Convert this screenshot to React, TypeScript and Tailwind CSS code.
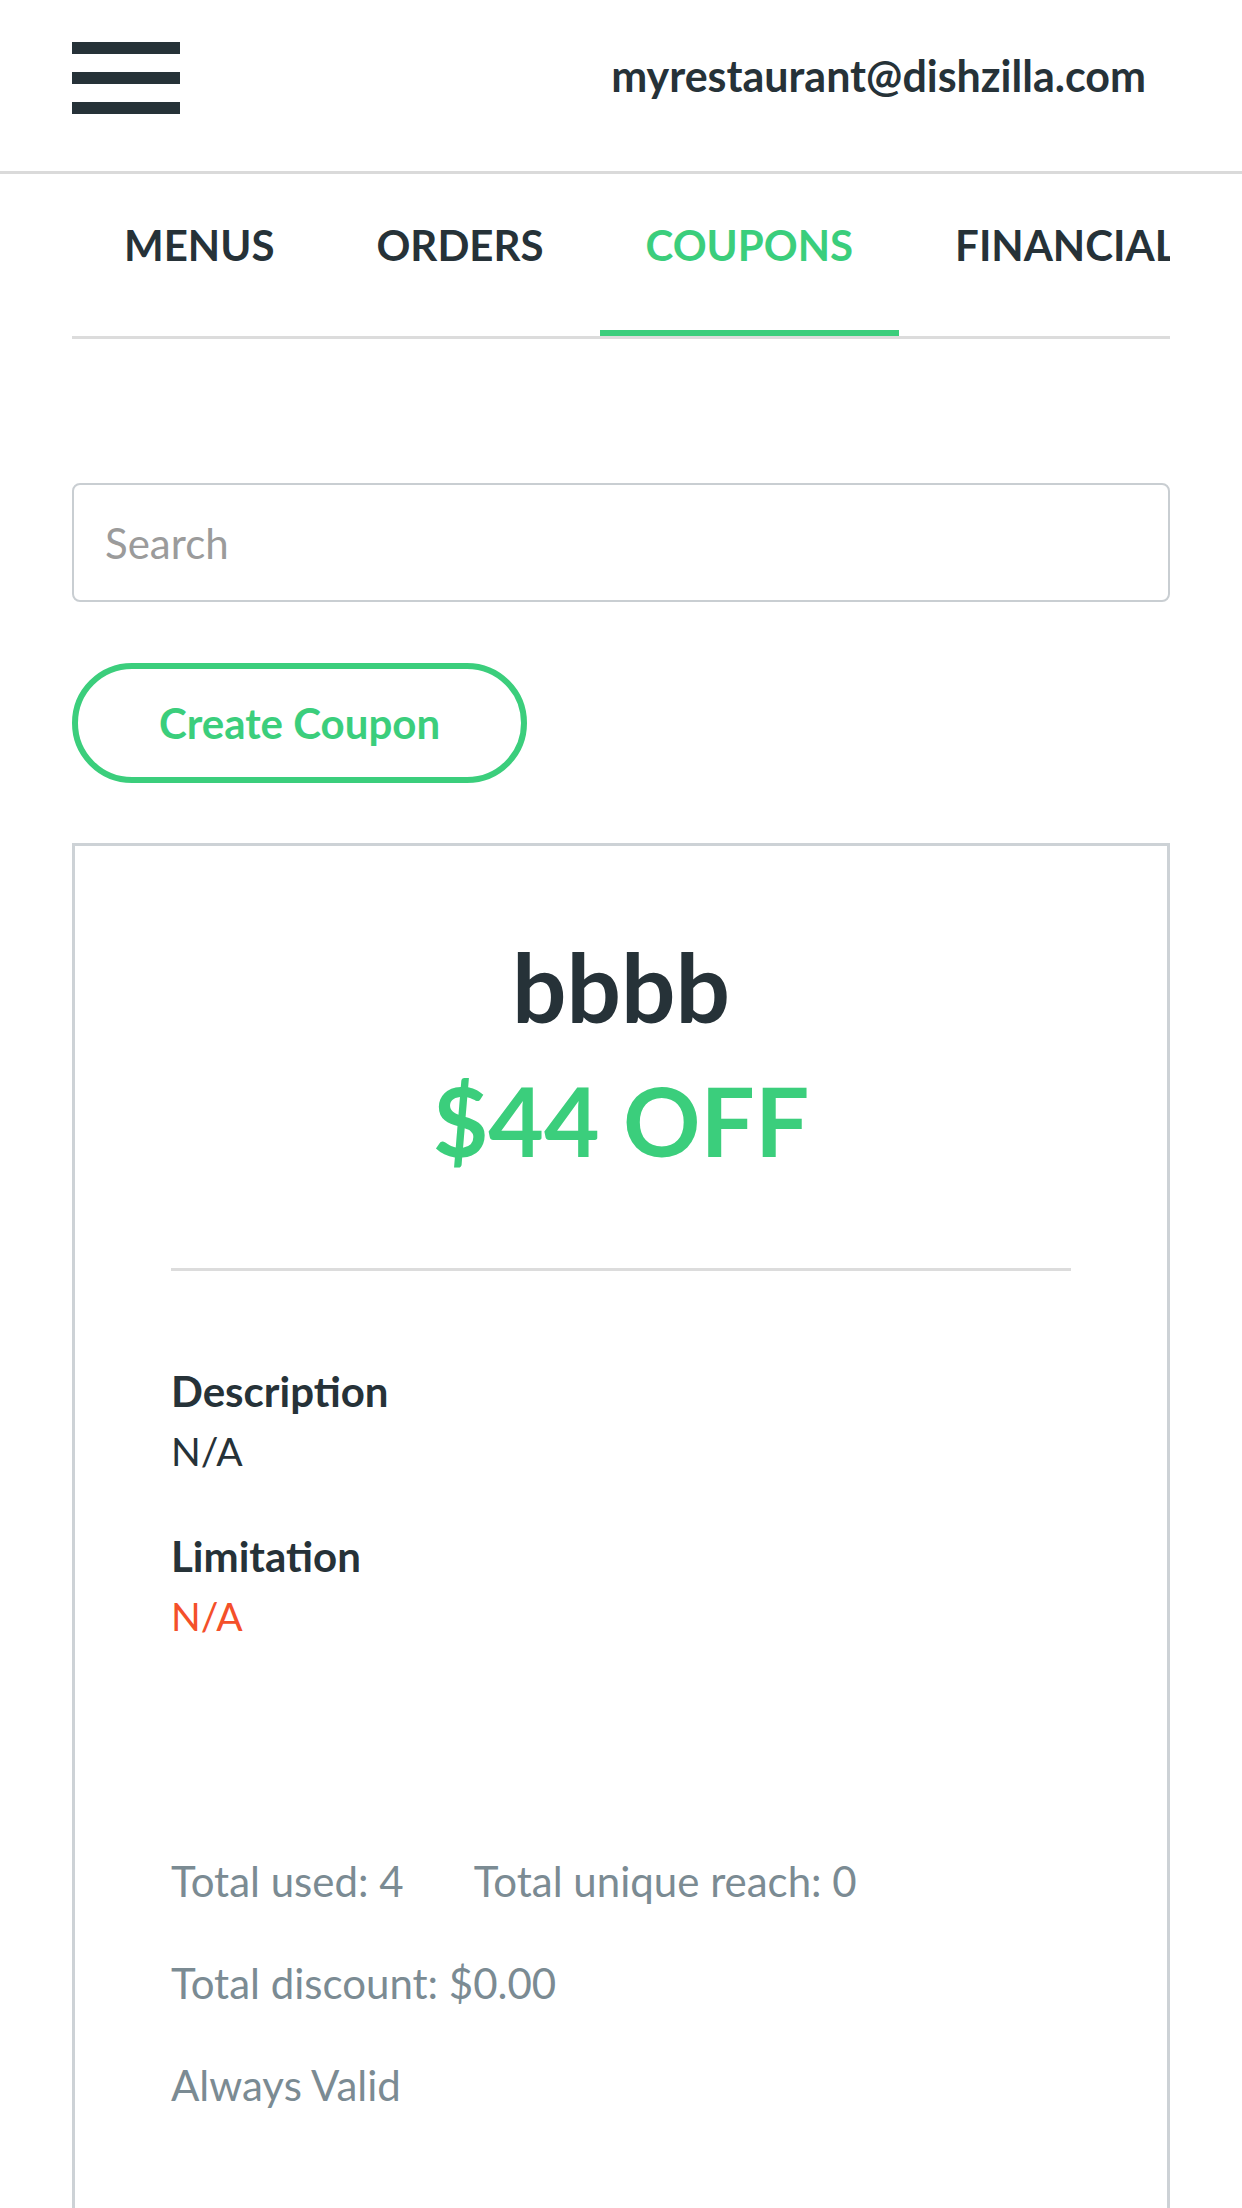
import React from "react";

const tabs = ["MENUS", "ORDERS", "COUPONS", "FINANCIAL"];

export default function App() {
  return (
    <div className="min-h-[2208px] w-[1242px] bg-white font-['Lato','Noto_Sans',sans-serif] text-[#263238] overflow-hidden">
      {/* Header */}
      <header className="flex h-[174px] items-start border-b-[3px] border-[#dadada] pl-[72px] pr-[96px] pt-[42px]">
        <div className="flex w-[108px] flex-col gap-[18px]">
          <span className="block h-[12px] w-[108px] bg-[#263238]" />
          <span className="block h-[12px] w-[108px] bg-[#263238]" />
          <span className="block h-[12px] w-[108px] bg-[#263238]" />
        </div>
        <div className="ml-auto mt-[9px] text-[43px] font-bold leading-[50px]">
          myrestaurant@dishzilla.com
        </div>
      </header>

      {/* Tabs */}
      <nav className="mx-[72px] overflow-hidden border-b-[3px] border-[#dcdcdc]">
        <div className="flex gap-[10px] pl-[6px]">
          {tabs.map((t) => {
            const active = t === "COUPONS";
            return (
              <div
                key={t}
                className={
                  active
                    ? "relative h-[162px] shrink-0 px-[46px] pt-[46px] text-[42px] font-bold leading-[50px] text-[#3bce7c]"
                    : "relative h-[162px] shrink-0 px-[46px] pt-[46px] text-[42px] font-bold leading-[50px] text-[#263238]"
                }
              >
                {t}
                {active && (
                  <span className="absolute bottom-0 left-0 right-0 h-[6px] bg-[#3bce7c]" />
                )}
              </div>
            );
          })}
        </div>
      </nav>

      <main className="px-[72px]">
        {/* Search */}
        <div className="mt-[144px] flex h-[119px] items-center rounded-[8px] border-2 border-[#c9ced2] px-[31px]">
          <span className="text-[42px] leading-[50px] text-[#9b9b9b]">Search</span>
        </div>

        {/* Create Coupon */}
        <button className="mt-[61px] flex h-[120px] w-[455px] items-center justify-center rounded-full border-[6px] border-[#3bce7c] text-[42px] font-bold leading-[50px] text-[#3bce7c]">
          Create Coupon
        </button>

        {/* Coupon card */}
        <section className="mt-[60px] min-h-[1400px] border-[3px] border-[#cdd2d6] px-[96px]">
          <div className="pt-[73px] text-center text-[96px] font-bold leading-[134px]">
            <div className="text-[#263238]">bbbb</div>
            <div className="text-[#3bce7c]">$44 OFF</div>
          </div>

          <div className="mt-[81px] h-[3px] bg-[#dcdcdc]" />

          <div className="mt-[90px] text-[39px] leading-[60px]">
            <div className="text-[42px] font-bold">Description</div>
            <div>N/A</div>
          </div>
          <div className="mt-[45px] text-[39px] leading-[60px]">
            <div className="text-[42px] font-bold">Limitation</div>
            <div className="text-[#f4502a]">N/A</div>
          </div>

          <div className="mt-[206px] text-[42px] leading-[59px] text-[#7b8b93]">
            <div className="flex">
              <span>Total used: 4</span>
              <span className="ml-[70px]">Total unique reach: 0</span>
            </div>
            <div className="mt-[43px]">Total discount: $0.00</div>
            <div className="mt-[43px]">Always Valid</div>
          </div>
        </section>
      </main>
    </div>
  );
}
